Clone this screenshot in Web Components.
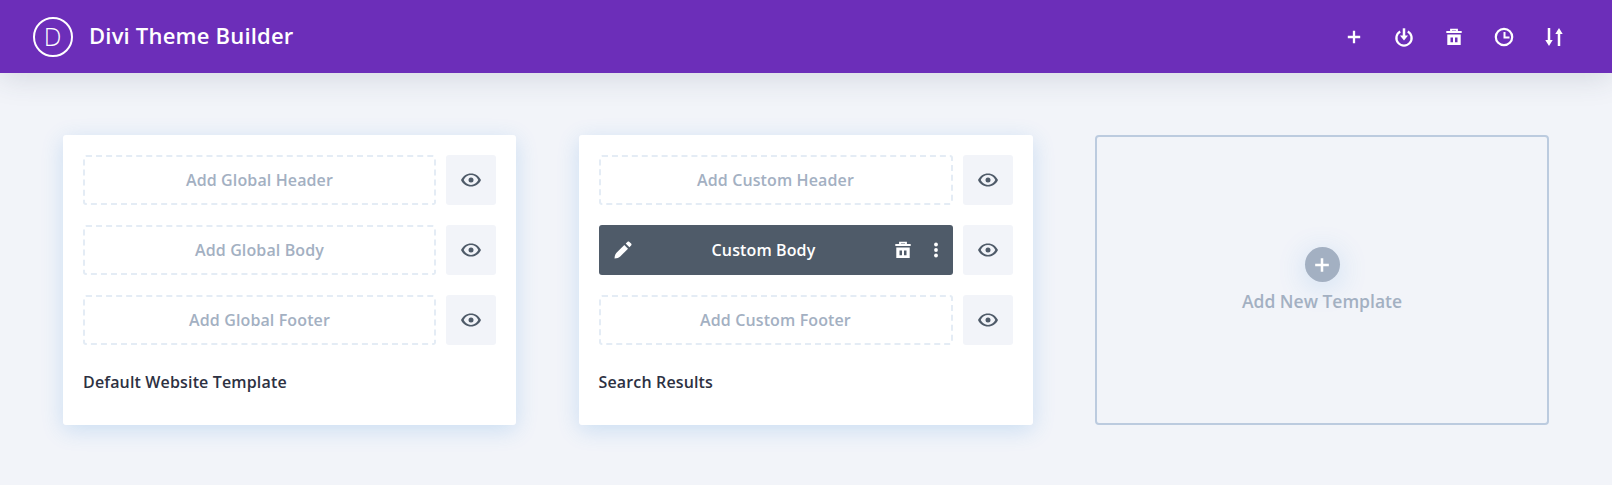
<!DOCTYPE html>
<html lang="en"><head><meta charset="utf-8"><title>Divi Theme Builder</title>
<style>
html,body{margin:0;height:485px;overflow:hidden;background:#f2f4f9;font-family:"Open Sans",sans-serif}
tb-app{height:485px}
</style></head><body>
<tb-app>
  <tb-header slot="header" title="Divi Theme Builder"></tb-header>
  <tb-card name="Default Website Template">
    <tb-row label="Add Global Header"></tb-row>
    <tb-row label="Add Global Body"></tb-row>
    <tb-row label="Add Global Footer"></tb-row>
  </tb-card>
  <tb-card name="Search Results">
    <tb-row label="Add Custom Header"></tb-row>
    <tb-row label="Custom Body" active></tb-row>
    <tb-row label="Add Custom Footer"></tb-row>
  </tb-card>
  <tb-add label="Add New Template"></tb-add>
</tb-app>
<script>
const ICONS={
 plus:'<path d="M10 3.800v12.400M3.800 10h12.400" stroke="currentColor" stroke-width="2.300" fill="none"/>',
 portability:'<path d="M6.200 4.400a7.600 7.600 0 1 0 7.600 0" stroke="currentColor" stroke-width="2.300" fill="none"/><path d="M10 1.300v9" stroke="currentColor" stroke-width="2.500"/><path d="M6 8.400h8L10 13.600z" fill="currentColor"/>',
 trash:'<path d="M2.300 5h15.400" stroke="currentColor" stroke-width="2"/><path d="M7 4.500V2.600h6v1.900" stroke="currentColor" stroke-width="1.800" fill="none"/><path fill-rule="evenodd" d="M3.300 7.500h13.400V18H3.300zM6.500 10.500v4.800h2.500v-4.800zM11 10.500v4.800h2.500v-4.800z" fill="currentColor"/>',
 clock:'<circle cx="10" cy="10" r="8.200" stroke="currentColor" stroke-width="2.200" fill="none"/><path d="M10.500 5v5.500H15.500" stroke="currentColor" stroke-width="2" fill="none"/>',
 sort:'<path d="M5 1v13M15 19V6" stroke="currentColor" stroke-width="2.500"/><path d="M1.300 13h7.400L5 19zM11.300 7h7.400L15 1z" fill="currentColor"/>',
 eye:'<path fill-rule="evenodd" d="M10 3.400c4.400 0 8.200 2.700 10 6.600-1.800 3.900-5.600 6.600-10 6.600S1.800 13.900 0 10C1.800 6.100 5.600 3.400 10 3.400zM10 5.100C6.900 5.100 4.200 7 2.700 10c1.500 3 4.200 4.900 7.300 4.900s5.800-1.900 7.300-4.900C15.800 7 13.100 5.100 10 5.100z" fill="currentColor"/><circle cx="10" cy="10" r="2.500" fill="currentColor"/>',
 pen:'<path d="M1.500 18.500c.1-2.600.7-4.400 2-5.700l7.800-7.800 3.700 3.700-7.800 7.800c-1.300 1.300-3.100 1.900-5.700 2z" fill="currentColor"/><path d="M12.700 3.600l1.700-1.700c.6-.6 1.400-.6 2 0l1.700 1.700c.6.6.6 1.400 0 2l-1.700 1.700z" fill="currentColor"/>',
 dots:'<circle cx="10" cy="4.500" r="1.900" fill="currentColor"/><circle cx="10" cy="10" r="1.900" fill="currentColor"/><circle cx="10" cy="15.500" r="1.900" fill="currentColor"/>'
};
const svg=(n,s=20)=>`<svg part="icon" width="${s}" height="${s}" viewBox="0 0 20 20" aria-hidden="true">${ICONS[n]}</svg>`;
function def(tag,render){
  customElements.define(tag,class extends HTMLElement{
    constructor(){super();this.attachShadow({mode:'open'})}
    connectedCallback(){this.shadowRoot.innerHTML=render(this)}
  });
}
def('tb-app',()=>`<style>
:host{display:flex;flex-direction:column}
.grid{display:grid;grid-template-columns:453px 454px 454px;gap:62.5px;padding:62px 63px 0;height:290px;grid-auto-rows:290px}
</style><slot name="header"></slot><div class="grid"><slot></slot></div>`);
def('tb-header',h=>`<style>
:host{display:flex;align-items:center;height:73px;background:#6c2eb9;color:#fff;padding:0 33px 0 32.5px;box-sizing:border-box;box-shadow:0 5px 30px rgba(50,60,90,.15);position:relative;z-index:1}
.logo{width:36px;height:36px;border:2px solid #fff;border-radius:50%;display:flex;align-items:center;justify-content:center;font-size:25px;font-weight:350;line-height:1;margin-right:16.5px;flex:none}
h1{margin:0 0 4px;font-size:22px;font-weight:600;line-height:1;flex:1;letter-spacing:.2px}
.b{width:50px;display:flex;justify-content:center;align-items:center}
</style><div class="logo">D</div><h1>${h.getAttribute('title')}</h1>
${['plus','portability','trash','clock','sort'].map(i=>`<div class="b">${svg(i)}</div>`).join('')}`);
def('tb-card',c=>`<style>
:host{display:block;background:#fff;border-radius:3px;padding:20px;box-sizing:border-box;box-shadow:0 5px 22px rgba(43,135,218,.2)}
.rows{display:flex;flex-direction:column;gap:20px}
.name{margin-top:26px;font-size:16px;font-weight:600;line-height:22px;color:#2d3142;letter-spacing:.15px}
</style><div class="rows"><slot></slot></div><div class="name">${c.getAttribute('name')}</div>`);
def('tb-row',r=>{
 const a=r.hasAttribute('active'),l=r.getAttribute('label');
 return `<style>
:host{display:flex;gap:10px;height:50px}
.s{flex:1;min-width:0;box-sizing:border-box;border-radius:3px;display:flex;align-items:center;justify-content:center;font-size:16px;font-weight:600;letter-spacing:.12px}
.e{border:2px dashed #e4ecf5;color:#a3b0c2}
.a{background:#4f5b69;color:#fff}
.l{flex:1;text-align:center}
.i{display:flex;align-items:center;justify-content:center;flex:none;box-sizing:border-box}
.eye{flex:none;width:50px;height:50px;background:#f2f4f9;border-radius:3px;color:#4f5b69;display:flex;align-items:center;justify-content:center}
</style>${a?`<div class="s a"><span class="i" style="width:48px">${svg('pen')}</span><span class="l">${l}</span><span class="i" style="width:44px">${svg('trash')}</span><span class="i" style="width:28px;padding-right:6px">${svg('dots')}</span></div>`:`<div class="s e">${l}</div>`}<div class="eye">${svg('eye')}</div>`});
def('tb-add',a=>`<style>
:host{display:flex;flex-direction:column;align-items:center;box-sizing:border-box;border:2px solid #bccbdf;border-radius:4px;color:#a3b0c2}
.p{margin-top:110px;width:35px;height:35px;border-radius:50%;background:#a3b0c2;color:#fff;display:flex;align-items:center;justify-content:center;box-shadow:0 5px 30px rgba(43,135,218,.2)}
.t{margin-top:7px;font-size:17.5px;font-weight:600;line-height:24px}
</style><div class="p">${svg('plus',22)}</div><div class="t">${a.getAttribute('label')}</div>`);
</script>
</body></html>
